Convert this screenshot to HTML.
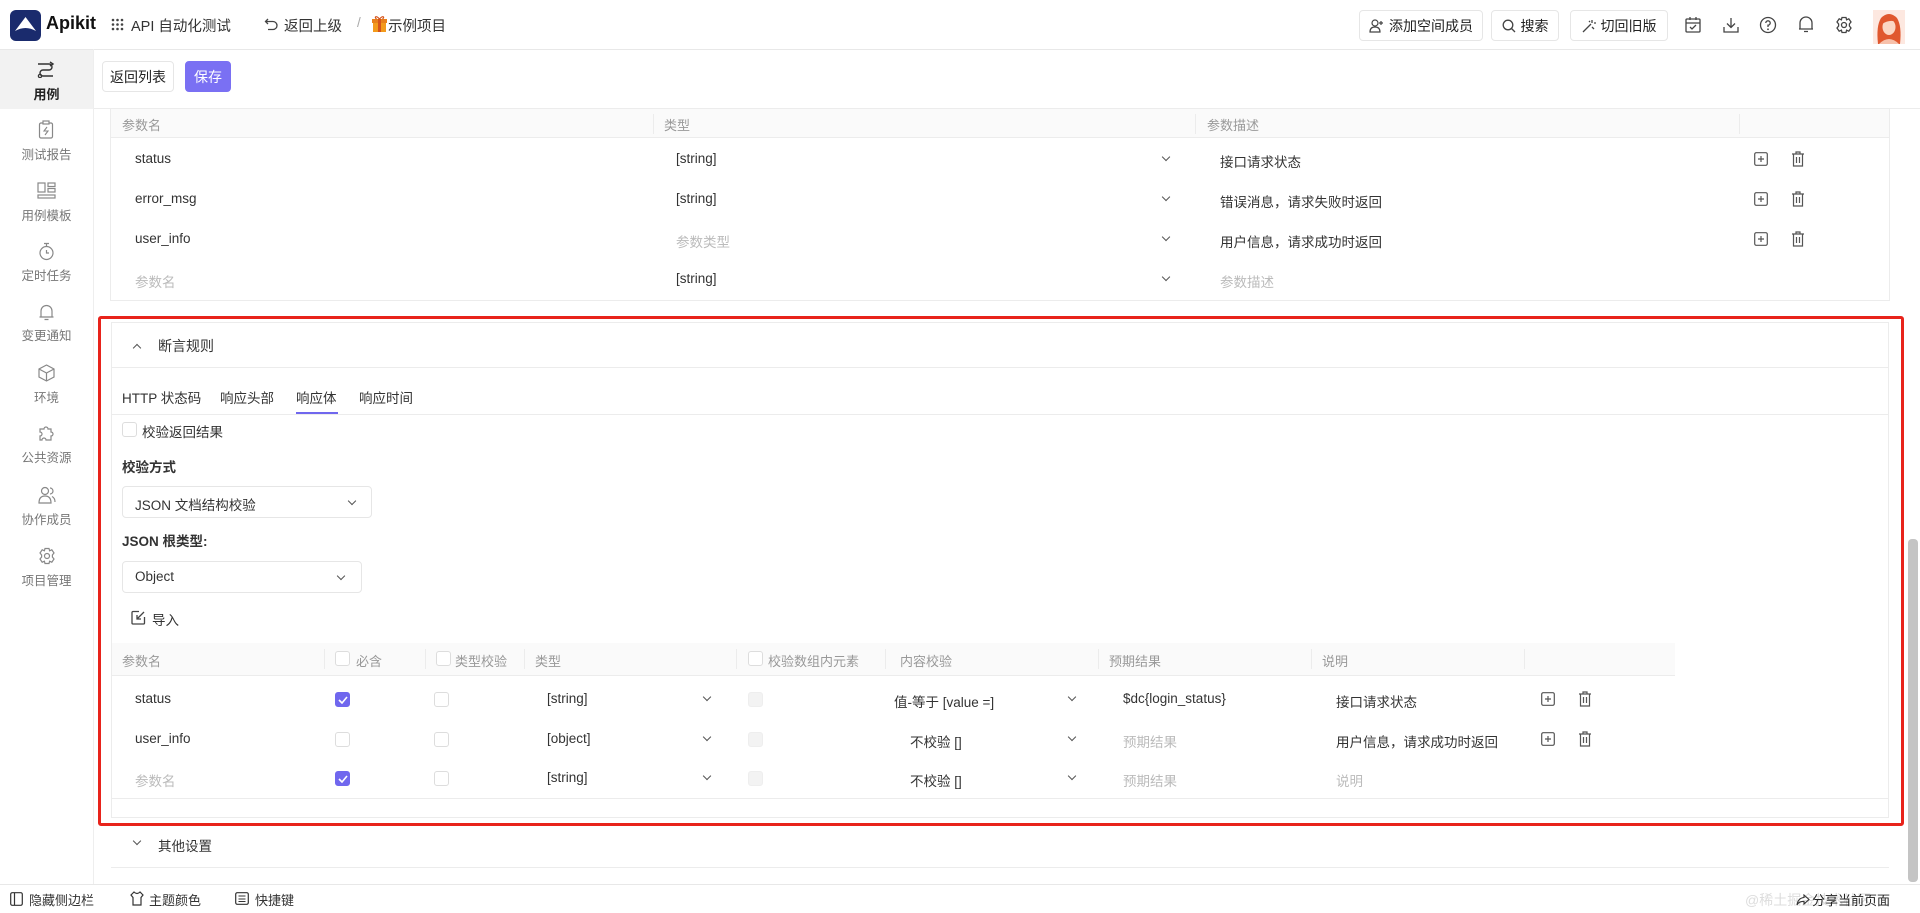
<!DOCTYPE html>
<html><head><meta charset="utf-8"><style>
*{box-sizing:border-box;margin:0;padding:0}
body{width:1920px;height:913px;overflow:hidden;background:#fff;font-family:"Liberation Sans","Noto Sans CJK SC",sans-serif;color:#333;font-size:13.5px;position:relative}
.a{position:absolute;white-space:nowrap}
.hl{position:absolute;background:#ececec;height:1px}
.vl{position:absolute;background:#ececec;width:1px}
.btn{position:absolute;border:1px solid #e6e6e6;border-radius:4px;background:#fff;font-size:14px;display:flex;align-items:center;justify-content:center;gap:5px;color:#222}
.g{color:#999}
.sb{position:absolute;left:0;width:93px;text-align:center;font-size:12.5px;color:#777}
.cb{position:absolute;width:15px;height:15px;border:1px solid #ddd;border-radius:3px;background:#fff}
.cbon{background:#7067ee;border-color:#7067ee}
.cbdis{background:#f3f3f3;border-color:#eee}
.chev{position:absolute;width:6px;height:6px;border-right:1px solid #555;border-bottom:1px solid #555;transform:rotate(45deg)}
svg{position:absolute}
</style></head><body>
<!-- header -->
<div class="hl" style="left:0;top:49px;width:1920px;background:#e8e8e8"></div>
<div class="a" style="left:10px;top:10px;width:31px;height:31px;background:#1a2b6d;border-radius:6px"></div>
<svg style="left:14px;top:16px" width="23" height="18" viewBox="0 0 23 18"><path d="M11.5 1 L22 15 Q11.5 9 1 15 Z" fill="#fff"/></svg>
<div class="a" style="left:46px;top:13px;font-size:18px;font-weight:bold;color:#111">Apikit</div>
<svg style="left:111px;top:18px" width="13" height="13"><g fill="#444"><circle cx="2" cy="2" r="1.3"/><circle cx="6.5" cy="2" r="1.3"/><circle cx="11" cy="2" r="1.3"/><circle cx="2" cy="6.5" r="1.3"/><circle cx="6.5" cy="6.5" r="1.3"/><circle cx="11" cy="6.5" r="1.3"/><circle cx="2" cy="11" r="1.3"/><circle cx="6.5" cy="11" r="1.3"/><circle cx="11" cy="11" r="1.3"/></g></svg>
<div class="a" style="left:131px;top:15px;font-size:14.5px">API 自动化测试</div>
<svg style="left:264px;top:17px" width="15" height="15" viewBox="0 0 15 15"><path d="M4 2 L1.5 4.5 L4 7 M1.5 4.5 H9 A4 4 0 0 1 9 12.5 H4" fill="none" stroke="#444" stroke-width="1.3"/></svg>
<div class="a" style="left:284px;top:15px;font-size:14.5px">返回上级</div>
<div class="a" style="left:357px;top:15px;color:#aaa">/</div>
<svg style="left:372px;top:15px" width="15" height="18"><rect x="1" y="5" width="13" height="12" fill="#f39a1b"/><rect x="0" y="4" width="15" height="4" fill="#e8801a"/><rect x="6" y="4" width="3" height="13" fill="#d5531a"/><path d="M7.5 4 C4 0 2 2 4.5 4 M7.5 4 C11 0 13 2 10.5 4" fill="none" stroke="#d5531a" stroke-width="1.2"/></svg>
<div class="a" style="left:388px;top:15px;font-size:14.5px">示例项目</div>

<div class="btn" style="left:1359px;top:10px;width:124px;height:31px"><svg style="position:static" width="15" height="14" viewBox="0 0 15 14"><circle cx="6" cy="4" r="3" fill="none" stroke="#444" stroke-width="1.2"/><path d="M1 13 Q1 8 6 8 Q11 8 11 13 Z" fill="none" stroke="#444" stroke-width="1.2"/><path d="M12 2 V6 M10 4 H14" stroke="#444" stroke-width="1.2"/></svg>添加空间成员</div>
<div class="btn" style="left:1491px;top:10px;width:68px;height:31px"><svg style="position:static" width="14" height="14"><circle cx="6" cy="6" r="4.8" fill="none" stroke="#444" stroke-width="1.3"/><path d="M9.5 9.5 L13 13" stroke="#444" stroke-width="1.3"/></svg>搜索</div>
<div class="btn" style="left:1570px;top:10px;width:98px;height:31px"><svg style="position:static" width="14" height="14"><path d="M1 13 L9 5 M10 1 V4 M12 4 H14 M10 8 L12 10 M7 2 L8 3" stroke="#444" stroke-width="1.3"/></svg>切回旧版</div>
<svg style="left:1684px;top:16px" width="18" height="18" viewBox="0 0 18 18"><rect x="2" y="3" width="14" height="13" rx="1" fill="none" stroke="#444" stroke-width="1.3"/><path d="M2 7 H16 M6 1 V4 M12 1 V4 M6 11 L8 13 L12 9" fill="none" stroke="#444" stroke-width="1.3"/></svg>
<svg style="left:1722px;top:16px" width="18" height="18" viewBox="0 0 18 18"><path d="M9 2 V11 M5 7.5 L9 11.5 L13 7.5 M2 11 V16 H16 V11" fill="none" stroke="#444" stroke-width="1.3"/></svg>
<svg style="left:1759px;top:16px" width="18" height="18" viewBox="0 0 18 18"><circle cx="9" cy="9" r="7.5" fill="none" stroke="#444" stroke-width="1.3"/><path d="M6.8 7 A2.2 2.2 0 1 1 9 9.2 V11" fill="none" stroke="#444" stroke-width="1.3"/><circle cx="9" cy="13.3" r=".9" fill="#444"/></svg>
<svg style="left:1797px;top:15px" width="18" height="19" viewBox="0 0 18 19"><path d="M3 14 V8 A6 6 0 0 1 15 8 V14 H2 H16 M7 16.5 H11" fill="none" stroke="#444" stroke-width="1.3"/></svg>
<svg style="left:1835px;top:16px" width="18" height="18" viewBox="0 0 18 18"><path d="M7 1.5 H11 L11.6 3.8 L13.8 2.8 L16 6 L14.4 8 V10 L16 12 L13.8 15.2 L11.6 14.2 L11 16.5 H7 L6.4 14.2 L4.2 15.2 L2 12 L3.6 10 V8 L2 6 L4.2 2.8 L6.4 3.8 Z" fill="none" stroke="#444" stroke-width="1.3"/><circle cx="9" cy="9" r="2.5" fill="none" stroke="#444" stroke-width="1.3"/></svg>
<div class="a" style="left:1873px;top:10px;width:32px;height:34px;background:#fde8e0;overflow:hidden">
<svg style="left:0;top:0" width="32" height="34"><path d="M5 34 Q3 16 8 8 Q16 0 24 8 Q29 16 27 34 Z" fill="#e0582e"/><ellipse cx="16" cy="17" rx="6.5" ry="8" fill="#fbd7c4"/><path d="M9 12 Q16 4 23 12 Q17 9 9 14 Z" fill="#e0582e"/><path d="M6 34 Q16 24 26 34 Z" fill="#f7c1ab"/></svg></div>

<!-- sidebar -->
<div class="vl" style="left:93px;top:49px;height:835px;background:#eee"></div>
<div class="a" style="left:0;top:50px;width:93px;height:59px;background:#f2f2f2"></div>
<svg style="left:37px;top:61px" width="18" height="17" viewBox="0 0 18 17"><path d="M1 3 H12 A3 3 0 0 1 12 9 H6 A3 3 0 0 0 6 15 H16 M13 1 L16 3 L13 5" fill="none" stroke="#333" stroke-width="1.4"/><circle cx="3" cy="15" r="1.6" fill="none" stroke="#333" stroke-width="1.3"/></svg>
<div class="sb" style="top:84px;color:#222;font-weight:bold;font-size:13px">用例</div>
<svg style="left:38px;top:120px" width="16" height="19" viewBox="0 0 16 19"><rect x="1.5" y="3" width="13" height="15" rx="1.5" fill="none" stroke="#888" stroke-width="1.2"/><rect x="5" y="1" width="6" height="3" fill="#fff" stroke="#888" stroke-width="1.2"/><path d="M9 7 L6 11 H10 L7 15" fill="none" stroke="#888" stroke-width="1.1"/></svg>
<div class="sb" style="top:144px">测试报告</div>
<svg style="left:37px;top:182px" width="19" height="17" viewBox="0 0 19 17"><rect x="1" y="1" width="7" height="9" fill="none" stroke="#888" stroke-width="1.2"/><rect x="11" y="1" width="7" height="3.5" fill="none" stroke="#888" stroke-width="1.2"/><rect x="11" y="6.5" width="7" height="3.5" fill="none" stroke="#888" stroke-width="1.2"/><rect x="1" y="13" width="17" height="3" fill="none" stroke="#888" stroke-width="1.2"/></svg>
<div class="sb" style="top:205px">用例模板</div>
<svg style="left:38px;top:242px" width="17" height="19" viewBox="0 0 17 19"><circle cx="8.5" cy="11" r="6.5" fill="none" stroke="#888" stroke-width="1.2"/><path d="M6 1.5 H11 M8.5 2 V4.5 M8.5 8 V11 H11" fill="none" stroke="#888" stroke-width="1.2"/></svg>
<div class="sb" style="top:265px">定时任务</div>
<svg style="left:38px;top:303px" width="17" height="19" viewBox="0 0 17 19"><path d="M3 14 V8 A5.5 5.5 0 0 1 14 8 V14 H1.5 H15.5 M6.5 16.5 H10.5" fill="none" stroke="#888" stroke-width="1.2"/></svg>
<div class="sb" style="top:325px">变更通知</div>
<svg style="left:38px;top:364px" width="17" height="18" viewBox="0 0 17 18"><path d="M8.5 1 L16 5 V13 L8.5 17 L1 13 V5 Z M8.5 9 L1 5 M8.5 9 L16 5 M8.5 9 V17" fill="none" stroke="#888" stroke-width="1.2"/></svg>
<div class="sb" style="top:387px">环境</div>
<svg style="left:38px;top:424px" width="17" height="18" viewBox="0 0 17 18"><path d="M2 5 H6 A2 2 0 1 1 10 5 H13 V8 A2 2 0 1 1 13 12 V16 H8 A2 2 0 1 0 4 16 H2 V12 A2 2 0 1 0 2 8 Z" fill="none" stroke="#888" stroke-width="1.2"/></svg>
<div class="sb" style="top:447px">公共资源</div>
<svg style="left:38px;top:486px" width="18" height="18" viewBox="0 0 18 18"><circle cx="7" cy="5" r="3.5" fill="none" stroke="#888" stroke-width="1.2"/><path d="M1 17 Q1 10 7 10 Q13 10 13 17 Z M12 2 A3 3 0 0 1 12 8 M14 10.5 Q17 12 17 16" fill="none" stroke="#888" stroke-width="1.2"/></svg>
<div class="sb" style="top:509px">协作成员</div>
<svg style="left:38px;top:547px" width="18" height="18" viewBox="0 0 18 18"><path d="M7 1.5 H11 L11.6 3.8 L13.8 2.8 L16 6 L14.4 8 V10 L16 12 L13.8 15.2 L11.6 14.2 L11 16.5 H7 L6.4 14.2 L4.2 15.2 L2 12 L3.6 10 V8 L2 6 L4.2 2.8 L6.4 3.8 Z" fill="none" stroke="#888" stroke-width="1.2"/><circle cx="9" cy="9" r="2.5" fill="none" stroke="#888" stroke-width="1.2"/></svg>
<div class="sb" style="top:570px">项目管理</div>

<!-- toolbar -->
<div class="btn" style="left:102px;top:61px;width:72px;height:31px">返回列表</div>
<div class="btn" style="left:185px;top:61px;width:46px;height:31px;background:#7a70f3;border-color:#7a70f3;color:#fff">保存</div>
<div class="hl" style="left:94px;top:108px;width:1826px"></div>

<!-- top table -->
<div class="vl" style="left:110px;top:109px;height:191px"></div>
<div class="vl" style="left:1889px;top:109px;height:191px"></div>
<div class="a" style="left:111px;top:109px;width:1778px;height:29px;background:#fafafa;border-bottom:1px solid #ececec"></div>
<div class="a g" style="left:122px;top:115px;font-size:13px">参数名</div>
<div class="a g" style="left:664px;top:115px;font-size:13px">类型</div>
<div class="a g" style="left:1207px;top:115px;font-size:13px">参数描述</div>
<div class="vl" style="left:653px;top:114px;height:20px"></div>
<div class="vl" style="left:1195px;top:114px;height:20px"></div>
<div class="vl" style="left:1739px;top:114px;height:20px"></div>

<div class="a" style="left:135px;top:151px">status</div><div class="a" style="left:676px;top:151px">[string]</div><div class="chev" style="left:1163px;top:154px"></div><div class="a" style="left:1220px;top:151px">接口请求状态</div>
<div class="a" style="left:135px;top:191px">error_msg</div><div class="a" style="left:676px;top:191px">[string]</div><div class="chev" style="left:1163px;top:194px"></div><div class="a" style="left:1220px;top:191px">错误消息，请求失败时返回</div>
<div class="a" style="left:135px;top:231px">user_info</div><div class="a g" style="left:676px;top:231px;color:#bbb">参数类型</div><div class="chev" style="left:1163px;top:234px"></div><div class="a" style="left:1220px;top:231px">用户信息，请求成功时返回</div>
<div class="a" style="left:135px;top:271px;color:#bbb">参数名</div><div class="a" style="left:676px;top:271px">[string]</div><div class="chev" style="left:1163px;top:274px"></div><div class="a" style="left:1220px;top:271px;color:#bbb">参数描述</div>
<div class="hl" style="left:110px;top:300px;width:1780px"></div>

<svg style="left:1754px;top:152px" width="14" height="14"><rect x=".7" y=".7" width="12.6" height="12.6" rx="1.5" fill="none" stroke="#555" stroke-width="1.2"/><path d="M7 4 V10 M4 7 H10" stroke="#555" stroke-width="1.2"/></svg>
<svg style="left:1791px;top:151px" width="14" height="16"><path d="M1 3 H13 M5 3 V1 H9 V3 M2.5 3 V15 H11.5 V3 M5.5 6 V12 M8.5 6 V12" fill="none" stroke="#555" stroke-width="1.2"/></svg>
<svg style="left:1754px;top:192px" width="14" height="14"><rect x=".7" y=".7" width="12.6" height="12.6" rx="1.5" fill="none" stroke="#555" stroke-width="1.2"/><path d="M7 4 V10 M4 7 H10" stroke="#555" stroke-width="1.2"/></svg>
<svg style="left:1791px;top:191px" width="14" height="16"><path d="M1 3 H13 M5 3 V1 H9 V3 M2.5 3 V15 H11.5 V3 M5.5 6 V12 M8.5 6 V12" fill="none" stroke="#555" stroke-width="1.2"/></svg>
<svg style="left:1754px;top:232px" width="14" height="14"><rect x=".7" y=".7" width="12.6" height="12.6" rx="1.5" fill="none" stroke="#555" stroke-width="1.2"/><path d="M7 4 V10 M4 7 H10" stroke="#555" stroke-width="1.2"/></svg>
<svg style="left:1791px;top:231px" width="14" height="16"><path d="M1 3 H13 M5 3 V1 H9 V3 M2.5 3 V15 H11.5 V3 M5.5 6 V12 M8.5 6 V12" fill="none" stroke="#555" stroke-width="1.2"/></svg>

<!-- assertion card -->
<div class="a" style="left:111px;top:322px;width:1778px;height:496px;border:1px solid #ececec"></div>
<div class="chev" style="left:134px;top:345px;transform:rotate(225deg)"></div>
<div class="a" style="left:158px;top:336px;font-size:14px">断言规则</div>
<div class="hl" style="left:112px;top:367px;width:1776px"></div>
<div class="a" style="left:122px;top:387px">HTTP 状态码</div>
<div class="a" style="left:220px;top:387px">响应头部</div>
<div class="a" style="left:296px;top:387px">响应体</div>
<div class="a" style="left:359px;top:387px">响应时间</div>
<div class="a" style="left:296px;top:412px;width:42px;height:2px;background:#7067ee"></div>
<div class="hl" style="left:112px;top:414px;width:1776px"></div>
<div class="cb" style="left:122px;top:422px"></div>
<div class="a" style="left:142px;top:421px">校验返回结果</div>
<div class="a" style="left:122px;top:456px;font-weight:bold">校验方式</div>
<div class="a" style="left:122px;top:486px;width:250px;height:32px;border:1px solid #e6e6e6;border-radius:4px"></div>
<div class="a" style="left:135px;top:494px">JSON 文档结构校验</div>
<div class="chev" style="left:349px;top:498px"></div>
<div class="a" style="left:122px;top:530px;font-weight:bold">JSON 根类型:</div>
<div class="a" style="left:122px;top:561px;width:240px;height:32px;border:1px solid #e6e6e6;border-radius:4px"></div>
<div class="a" style="left:135px;top:569px">Object</div>
<div class="chev" style="left:338px;top:573px"></div>
<svg style="left:131px;top:610px" width="15" height="15" viewBox="0 0 15 15"><path d="M8 1.5 H2 A1 1 0 0 0 1 2.5 V13 A1 1 0 0 0 2 14 H12.5 A1 1 0 0 0 13.5 13 V7 M13 2 L6 9 M6 5 V9 H10" fill="none" stroke="#444" stroke-width="1.3"/></svg>
<div class="a" style="left:152px;top:609px">导入</div>

<!-- table2 -->
<div class="a" style="left:112px;top:643px;width:1563px;height:33px;background:#fafafa;border-bottom:1px solid #ececec"></div>
<div class="a g" style="left:122px;top:651px;font-size:13px">参数名</div>
<div class="vl" style="left:324px;top:649px;height:20px"></div>
<div class="cb" style="left:335px;top:651px"></div><div class="a g" style="left:356px;top:651px;font-size:13px">必含</div>
<div class="vl" style="left:425px;top:649px;height:20px"></div>
<div class="cb" style="left:436px;top:651px"></div><div class="a g" style="left:455px;top:651px;font-size:13px">类型校验</div>
<div class="vl" style="left:524px;top:649px;height:20px"></div>
<div class="a g" style="left:535px;top:651px;font-size:13px">类型</div>
<div class="vl" style="left:736px;top:649px;height:20px"></div>
<div class="cb" style="left:748px;top:651px"></div><div class="a g" style="left:768px;top:651px;font-size:13px">校验数组内元素</div>
<div class="vl" style="left:885px;top:649px;height:20px"></div>
<div class="a g" style="left:900px;top:651px;font-size:13px">内容校验</div>
<div class="vl" style="left:1098px;top:649px;height:20px"></div>
<div class="a g" style="left:1109px;top:651px;font-size:13px">预期结果</div>
<div class="vl" style="left:1311px;top:649px;height:20px"></div>
<div class="a g" style="left:1322px;top:651px;font-size:13px">说明</div>
<div class="vl" style="left:1524px;top:649px;height:20px"></div>

<div class="a" style="left:135px;top:691px">status</div>
<div class="cb cbon" style="left:335px;top:692px"></div><svg style="left:338px;top:696px" width="10" height="8"><path d="M1 4 L4 7 L9 1" fill="none" stroke="#fff" stroke-width="1.6"/></svg>
<div class="cb" style="left:434px;top:692px"></div>
<div class="a" style="left:547px;top:691px">[string]</div><div class="chev" style="left:704px;top:694px"></div>
<div class="cb cbdis" style="left:748px;top:692px"></div>
<div class="a" style="left:894px;top:691px">值-等于 [value =]</div><div class="chev" style="left:1069px;top:694px"></div>
<div class="a" style="left:1123px;top:691px">$dc{login_status}</div>
<div class="a" style="left:1336px;top:691px">接口请求状态</div>
<svg style="left:1541px;top:692px" width="14" height="14"><rect x=".7" y=".7" width="12.6" height="12.6" rx="1.5" fill="none" stroke="#555" stroke-width="1.2"/><path d="M7 4 V10 M4 7 H10" stroke="#555" stroke-width="1.2"/></svg>
<svg style="left:1578px;top:691px" width="14" height="16"><path d="M1 3 H13 M5 3 V1 H9 V3 M2.5 3 V15 H11.5 V3 M5.5 6 V12 M8.5 6 V12" fill="none" stroke="#555" stroke-width="1.2"/></svg>

<div class="a" style="left:135px;top:731px">user_info</div>
<div class="cb" style="left:335px;top:732px"></div>
<div class="cb" style="left:434px;top:732px"></div>
<div class="a" style="left:547px;top:731px">[object]</div><div class="chev" style="left:704px;top:734px"></div>
<div class="cb cbdis" style="left:748px;top:732px"></div>
<div class="a" style="left:910px;top:731px">不校验 []</div><div class="chev" style="left:1069px;top:734px"></div>
<div class="a" style="left:1123px;top:731px;color:#bbb">预期结果</div>
<div class="a" style="left:1336px;top:731px">用户信息，请求成功时返回</div>
<svg style="left:1541px;top:732px" width="14" height="14"><rect x=".7" y=".7" width="12.6" height="12.6" rx="1.5" fill="none" stroke="#555" stroke-width="1.2"/><path d="M7 4 V10 M4 7 H10" stroke="#555" stroke-width="1.2"/></svg>
<svg style="left:1578px;top:731px" width="14" height="16"><path d="M1 3 H13 M5 3 V1 H9 V3 M2.5 3 V15 H11.5 V3 M5.5 6 V12 M8.5 6 V12" fill="none" stroke="#555" stroke-width="1.2"/></svg>

<div class="a" style="left:135px;top:770px;color:#bbb">参数名</div>
<div class="cb cbon" style="left:335px;top:771px"></div><svg style="left:338px;top:775px" width="10" height="8"><path d="M1 4 L4 7 L9 1" fill="none" stroke="#fff" stroke-width="1.6"/></svg>
<div class="cb" style="left:434px;top:771px"></div>
<div class="a" style="left:547px;top:770px">[string]</div><div class="chev" style="left:704px;top:773px"></div>
<div class="cb cbdis" style="left:748px;top:771px"></div>
<div class="a" style="left:910px;top:770px">不校验 []</div><div class="chev" style="left:1069px;top:773px"></div>
<div class="a" style="left:1123px;top:770px;color:#bbb">预期结果</div>
<div class="a" style="left:1336px;top:770px;color:#bbb">说明</div>
<div class="hl" style="left:112px;top:798px;width:1776px"></div>

<div class="a" style="left:98px;top:316px;width:1806px;height:510px;border:3px solid #e8231b;border-radius:3px"></div>

<div class="chev" style="left:134px;top:838px"></div>
<div class="a" style="left:158px;top:835px">其他设置</div>
<div class="hl" style="left:111px;top:867px;width:1778px"></div>

<div class="a" style="left:1908px;top:539px;width:10px;height:343px;background:#c4c4c4;border-radius:4px"></div>

<div class="hl" style="left:0;top:884px;width:1920px;background:#e8e8e8"></div>
<svg style="left:10px;top:892px" width="13" height="14"><rect x=".7" y=".7" width="11.6" height="12.6" rx="1.5" fill="none" stroke="#333" stroke-width="1.2"/><path d="M4.5 1 V13" stroke="#333" stroke-width="1.2"/></svg>
<div class="a" style="left:29px;top:890px;font-size:13px">隐藏侧边栏</div>
<svg style="left:130px;top:891px" width="14" height="15"><path d="M4 1 L1 4 L3 6.5 V14 H11 V6.5 L13 4 L10 1 Q7 4 4 1 Z" fill="none" stroke="#333" stroke-width="1.2"/></svg>
<div class="a" style="left:149px;top:890px;font-size:13px">主题颜色</div>
<svg style="left:235px;top:892px" width="14" height="13"><rect x=".7" y=".7" width="12.6" height="11.6" rx="1.5" fill="none" stroke="#333" stroke-width="1.2"/><path d="M3.5 4 H10.5 M3.5 7 H10.5 M3.5 9.5 H10.5" stroke="#333" stroke-width="1"/></svg>
<div class="a" style="left:255px;top:890px;font-size:13px">快捷键</div>
<div class="a" style="left:1745px;top:890px;font-size:14px;color:#ddd">@稀土掘金技术社区</div>
<svg style="left:1796px;top:894px" width="14" height="12"><path d="M8 1 L13 5.5 L8 10 V7.5 Q3 7 1 11 Q2 4 8 3.5 Z" fill="none" stroke="#333" stroke-width="1.1"/></svg>
<div class="a" style="left:1812px;top:890px;font-size:13px;color:#222">分享当前页面</div>
</body></html>
